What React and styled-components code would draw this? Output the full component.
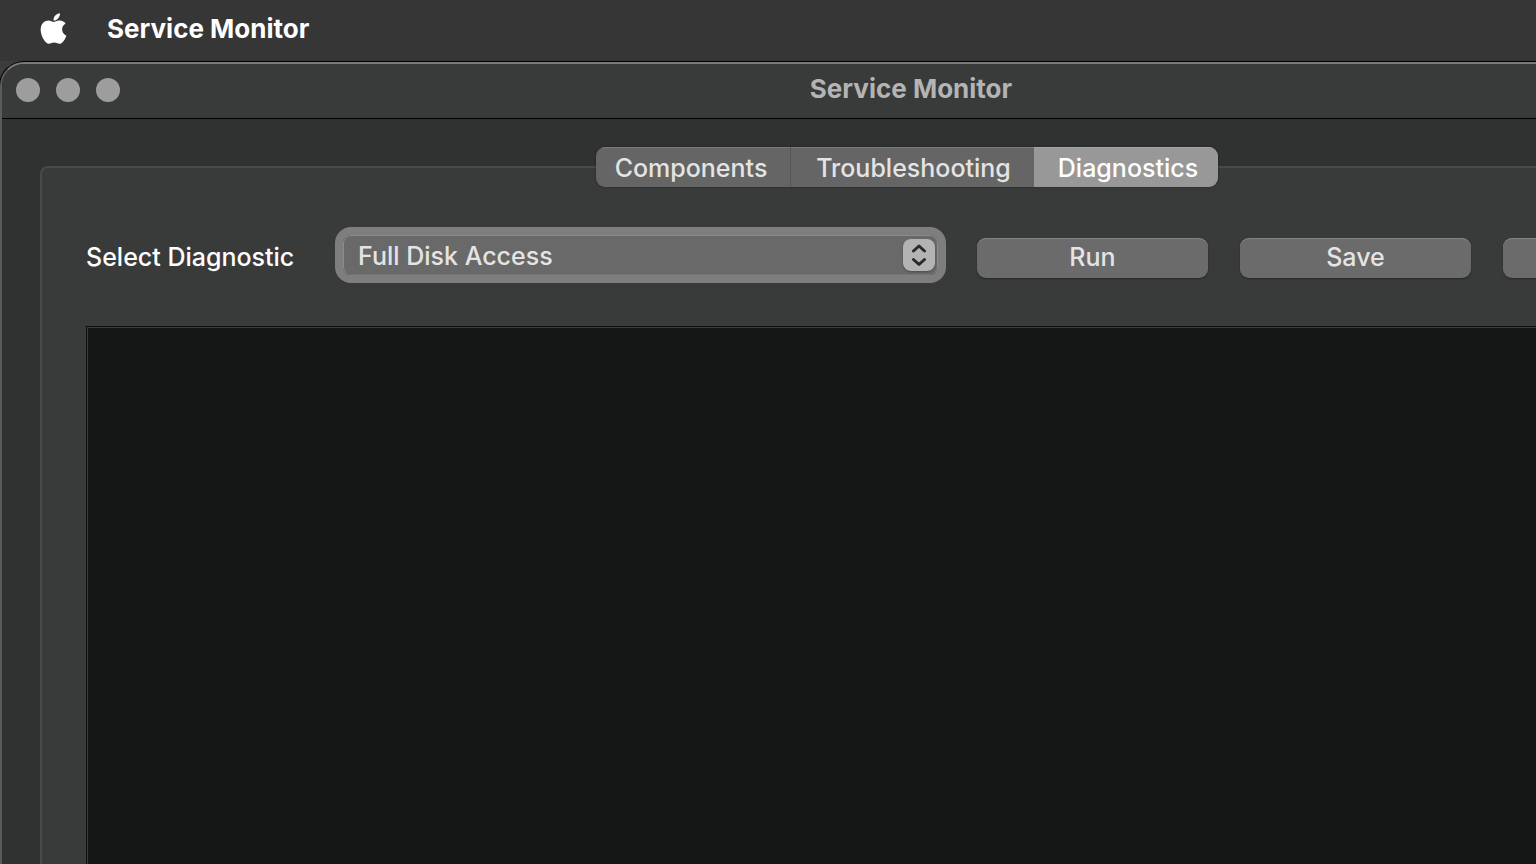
import { useState } from 'react';
import styled, { createGlobalStyle } from 'styled-components';
import { FaApple } from 'react-icons/fa';

const tabs = [
    { name: 'Components', width: 194, pad: '2px 4px 0 0' },
    { name: 'Troubleshooting', width: 244, pad: '2px 0 0 2px' },
    { name: 'Diagnostics', width: 184, pad: '2px 0 0 4px' },
];

const App = () => {
    const [active, setActive] = useState('Diagnostics');

    return (
        <Desktop>
            <GlobalStyle />
            <MenuBar>
                <FaApple size={35} aria-hidden="true" />
                <AppName>Service Monitor</AppName>
            </MenuBar>
            <Window>
                <TitleBar>
                    <Lights>
                        <Light aria-label="Close" />
                        <Light aria-label="Minimize" />
                        <Light aria-label="Zoom" />
                    </Lights>
                    <Title>Service Monitor</Title>
                </TitleBar>
                <Content>
                    <TabList role="tablist">
                        {tabs.map((tab) => (
                            <Tab
                                key={tab.name}
                                role="tab"
                                aria-selected={active === tab.name}
                                $active={active === tab.name}
                                $width={tab.width}
                                $pad={tab.pad}
                                onClick={() => setActive(tab.name)}
                            >
                                {tab.name}
                            </Tab>
                        ))}
                    </TabList>
                    <Panel>
                        <Controls>
                            <Label htmlFor="diagnostic">Select Diagnostic</Label>
                            <SelectBox>
                                <Select id="diagnostic">
                                    <option>Full Disk Access</option>
                                </Select>
                                <Stepper>
                                    <svg width="16" height="24" viewBox="0 0 16 24" aria-hidden="true">
                                        <path
                                            d="M2.5 8 8 3l5.5 5M2.5 16.5l5.5 5 5.5-5"
                                            fill="none"
                                            stroke="#292b2a"
                                            strokeWidth="3"
                                            strokeLinecap="round"
                                            strokeLinejoin="round"
                                        />
                                    </svg>
                                </Stepper>
                            </SelectBox>
                            <Actions>
                                <Button>Run</Button>
                                <Button>Save</Button>
                                <Button aria-label="Clear" />
                            </Actions>
                        </Controls>
                        <Output readOnly aria-label="Output" />
                    </Panel>
                </Content>
            </Window>
        </Desktop>
    );
};

export default App;

const GlobalStyle = createGlobalStyle`
    * {
        box-sizing: border-box;
    }

    body {
        margin: 0;
        background: #363636;
    }

    body, button, select, textarea {
        font-family: Inter, 'Liberation Sans', sans-serif;
        font-size: 25px;
        font-weight: 500;
        line-height: 32px;
    }
`;

const Desktop = styled.div`
    height: 100vh;
    display: flex;
    flex-direction: column;
    overflow: hidden;
    background: #3c3c3c;
    color: #fff;
`;

const MenuBar = styled.header`
    flex: none;
    height: 61px;
    padding: 0 36px 4px;
    display: flex;
    align-items: center;
    column-gap: 36px;
    background: #363636;
`;

const AppName = styled.span`
    font-size: 26px;
    font-weight: 700;
`;

/* the window is wider than the screen and runs off its right side */
const Window = styled.main`
    flex: 1;
    width: calc(100% + 284px);
    display: flex;
    flex-direction: column;
    margin-top: 1px;
    border-left: 2px solid #5a5b5a;
    border-top: 2px solid #7b7b7b;
    border-radius: 24px 24px 0 0;
    background: #303231;
    box-shadow: 0 0 0 1px #000;
    overflow: hidden;
`;

const TitleBar = styled.div`
    flex: none;
    height: 55px;
    padding: 0 14px 2px;
    display: grid;
    grid-template-columns: 1fr auto 1fr;
    align-items: center;
    background: #393b3a;
    border-bottom: 1px solid #000;
`;

const Lights = styled.div`
    display: flex;
    column-gap: 16px;
`;

const Light = styled.button`
    width: 24px;
    height: 24px;
    padding: 0;
    border: 0;
    border-radius: 50%;
    background: #9d9d9d;
`;

const Title = styled.h1`
    margin: 0;
    padding-bottom: 2px;
    font-size: 26px;
    font-weight: 700;
    color: #b4b4b4;
`;

const Content = styled.div`
    flex: 1;
    display: flex;
    flex-direction: column;
    padding: 28px 46px 0 38px;
`;

const TabList = styled.div`
    display: flex;
    align-self: center;
    z-index: 1;
    margin-bottom: -21px;
    border-radius: 9px;
    overflow: hidden;
    box-shadow: 0 0 2px #1c1e1d;
`;

const Tab = styled.button`
    width: ${(props) => props.$width}px;
    height: 40px;
    padding: ${(props) => props.$pad};
    border: 0;
    color: ${(props) => (props.$active ? '#fff' : '#e4e4e4')};
    background: ${(props) => (props.$active ? '#989898' : '#646564')};
    box-shadow: inset 0 1px ${(props) => (props.$active ? '#a6a6a6' : '#7b7b7b')};

    &:not(:first-child) {
        border-left: ${(props) => (props.$active ? '0' : '1px solid #545554')};
    }
`;

const Panel = styled.section`
    flex: 1;
    display: flex;
    flex-direction: column;
    padding: 67px 38px 0 44px;
    border: 2px solid #484a49;
    border-bottom: 0;
    border-radius: 8px 8px 0 0;
    background: #393b3a;
`;

const Controls = styled.div`
    display: flex;
    align-items: flex-start;
    margin-bottom: 48px;
`;

const Label = styled.label`
    flex: none;
    width: 257px;
    padding-top: 6px;
`;

const SelectBox = styled.div`
    position: relative;
    flex: 1;
    border-radius: 8px;
    box-shadow: 0 0 0 8px #7e7e7e;
`;

const Select = styled.select`
    display: block;
    width: 100%;
    height: 40px;
    padding: 2px 40px 0 14px;
    appearance: none;
    border: 1px solid #8b8b8b;
    border-bottom-color: #747474;
    border-radius: 8px;
    outline: 0;
    background: #696969;
    color: #e4e4e4;
`;

const Stepper = styled.span`
    position: absolute;
    top: 4px;
    right: 3px;
    width: 32px;
    height: 32px;
    display: flex;
    align-items: center;
    justify-content: center;
    border-radius: 8px;
    background: #b3b3b3;
    box-shadow: 0 1px 2px #4c4c4c;
    pointer-events: none;
`;

const Actions = styled.div`
    flex: none;
    display: flex;
    column-gap: 32px;
    padding: 3px 0 0 39px;
`;

const Button = styled.button`
    width: 231px;
    height: 40px;
    padding: 0 0 2px;
    border: 0;
    border-radius: 9px;
    color: #e4e4e4;
    background: #6b6b6b;
    box-shadow: inset 0 1px #838383, 0 1px 2px #262827;
`;

const Output = styled.textarea`
    flex: 1;
    display: block;
    width: 100%;
    padding: 8px;
    border: 1px solid #0c0d0c;
    border-bottom: 0;
    outline: 0;
    resize: none;
    background: #151716;
    box-shadow: inset 1px 1px #3b3d3c;
    color: #fff;
`;
